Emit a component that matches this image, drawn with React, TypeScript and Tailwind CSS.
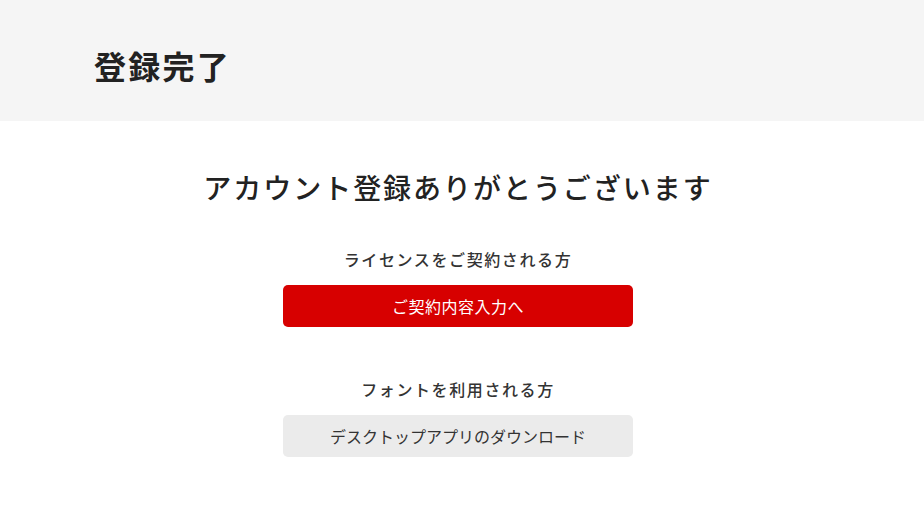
import React from "react";

export default function App() {
  const font = { fontFamily: '"Noto Sans CJK JP", "Noto Sans", sans-serif' };
  return (
    <div style={font} className="w-[924px] min-h-[520px] bg-white text-[#222]">
      <header className="h-[121px] bg-[#f5f5f5] flex items-center pl-[94px]">
        <h1 className="text-[32px] font-bold tracking-[0.07em] leading-none mt-[9px]">登録完了</h1>
      </header>
      <main className="w-[916px] flex flex-col items-center">
        <h2 className="mt-[48px] text-[28px] tracking-[0.07em] leading-[36px] font-medium text-[#222]">
          アカウント登録ありがとうございます
        </h2>
        <p className="mt-[44px] text-[16px] tracking-[0.1em] leading-[20px] font-medium text-[#333]">
          ライセンスをご契約される方
        </p>
        <button className="mt-[16px] w-[350px] h-[42px] rounded-[5px] bg-[#d70000] text-white text-[16px] tracking-[0.03em]">
          ご契約内容入力へ
        </button>
        <p className="mt-[52px] text-[16px] tracking-[0.1em] leading-[20px] font-medium text-[#333]">
          フォントを利用される方
        </p>
        <button className="mt-[16px] w-[350px] h-[42px] rounded-[5px] bg-[#ebebeb] text-[#333] text-[16px]">
          デスクトップアプリのダウンロード
        </button>
      </main>
    </div>
  );
}
